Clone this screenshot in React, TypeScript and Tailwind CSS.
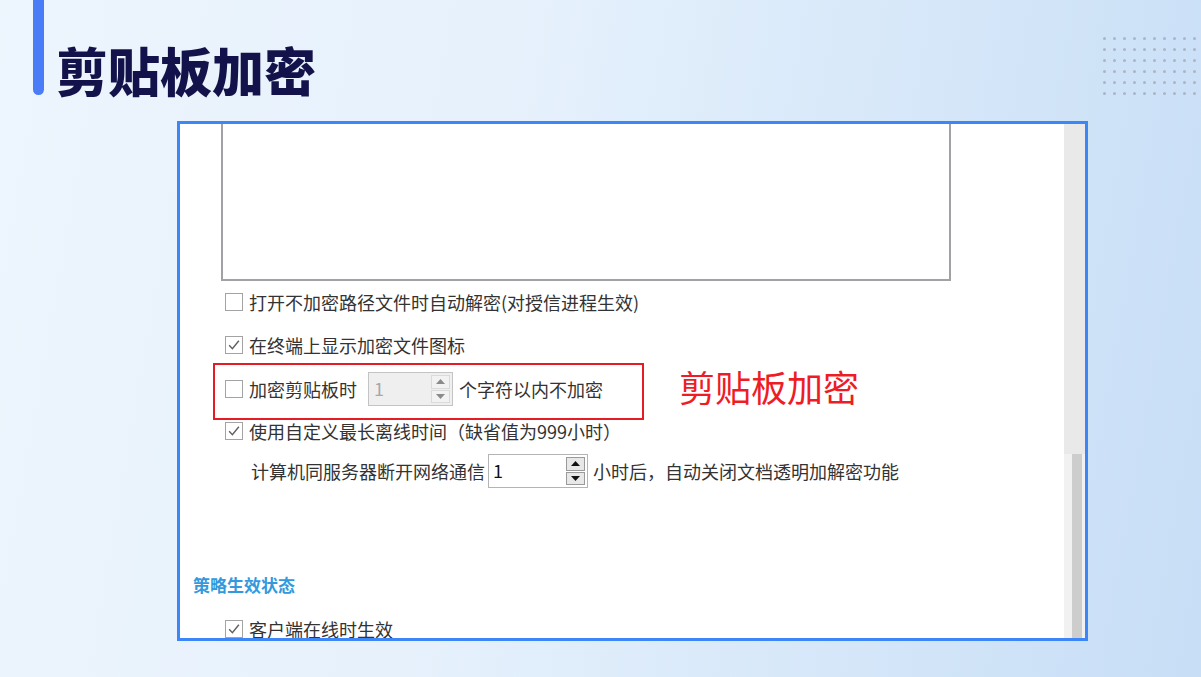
import React from "react";

const FONT = '"Microsoft YaHei", "Noto Sans CJK SC", "Noto Sans", sans-serif';

function CheckBox({ checked }: { checked?: boolean }) {
  return (
    <div className="w-[18px] h-[18px] border border-[#a3a3a3] bg-white flex items-center justify-center shrink-0">
      {checked && (
        <svg width="14" height="14" viewBox="0 0 13 13">
          <path d="M2 6.8 L5 10 L11 2.5" fill="none" stroke="#5f5f5f" strokeWidth="1.3" />
        </svg>
      )}
    </div>
  );
}

function Arrow({ up, color }: { up?: boolean; color: string }) {
  return (
    <svg width="9" height="5" viewBox="0 0 9 5">
      {up ? <path d="M0 5 L4.5 0 L9 5 Z" fill={color} /> : <path d="M0 0 L4.5 5 L9 0 Z" fill={color} />}
    </svg>
  );
}

function Spinner({ disabled, width }: { disabled?: boolean; width: string }) {
  return (
    <div
      className={
        disabled
          ? `${width} h-[34px] border border-[#c4c4c4] bg-[#efefef] flex items-stretch shrink-0`
          : `${width} h-[34px] border border-[#b4b4b4] bg-white flex items-stretch shrink-0`
      }
    >
      <div
        className={
          disabled
            ? "flex-1 pl-[5px] pt-[3px] text-[18px] leading-[24px] text-[#a8a8a8]"
            : "flex-1 pl-[4px] pt-[3px] text-[18px] leading-[24px] text-[#111]"
        }
      >
        1
      </div>
      <div className="w-[21px] flex flex-col py-[2px] pr-[2px] gap-[1px]">
        <div
          className={
            disabled
              ? "flex-1 border border-[#dadada] bg-[#f2f2f2] flex items-center justify-center"
              : "flex-1 border border-[#9a9a9a] bg-[#e8e8e8] flex items-center justify-center"
          }
        >
          <Arrow up color={disabled ? "#8a8a8a" : "#111"} />
        </div>
        <div
          className={
            disabled
              ? "flex-1 border border-[#dadada] bg-[#f2f2f2] flex items-center justify-center"
              : "flex-1 border border-[#9a9a9a] bg-[#e8e8e8] flex items-center justify-center"
          }
        >
          <Arrow color={disabled ? "#8a8a8a" : "#111"} />
        </div>
      </div>
    </div>
  );
}

export default function App() {
  const dots = Array.from({ length: 60 });
  return (
    <div
      className="w-[1201px] h-[677px] overflow-hidden flex flex-col bg-[linear-gradient(100deg,#edf5fd_0%,#e6f1fc_40%,#c7def6_100%)]"
      style={{ fontFamily: FONT }}
    >
      {/* header */}
      <div className="flex h-[121px] shrink-0">
        <div className="ml-[33px] w-[11px] h-[95px] rounded-b-full bg-[#4a7cf8]" />
        <h1 className="ml-[12px] mt-[44px] text-[52px] leading-none font-black text-[#14124a]">
          剪贴板加密
        </h1>
        <div className="ml-auto mr-[5px] mt-[37px] grid grid-cols-10 gap-x-[7px] gap-y-[8px] h-fit">
          {dots.map((_, i) => (
            <div key={i} className="w-[3px] h-[3px] rounded-full bg-[#a8b6c6]" />
          ))}
        </div>
      </div>

      {/* screenshot panel */}
      <div className="ml-[177px] w-[911px] h-[520px] border-[3px] border-[#3d86f8] bg-white flex overflow-hidden">
        <div className="relative flex-1 flex flex-col text-[18px] text-[#333] overflow-hidden">
          {/* list box */}
          <div className="ml-[41px] w-[730px] h-[157px] shrink-0 border-x-2 border-b-2 border-[#a2a2a6] bg-white" />

          {/* row 1 */}
          <div className="mt-[6px] ml-[45px] h-[30px] flex items-center shrink-0">
            <CheckBox />
            <span className="ml-[6px] whitespace-nowrap">打开不加密路径文件时自动解密(对授信进程生效)</span>
          </div>
          {/* row 2 */}
          <div className="mt-[13px] ml-[45px] h-[30px] flex items-center shrink-0">
            <CheckBox checked />
            <span className="ml-[6px] whitespace-nowrap">在终端上显示加密文件图标</span>
          </div>
          {/* row 3 */}
          <div className="mt-[10px] ml-[45px] h-[38px] flex items-center shrink-0">
            <CheckBox />
            <span className="ml-[6px] whitespace-nowrap">加密剪贴板时</span>
            <div className="ml-[11px]">
              <Spinner disabled width="w-[85px]" />
            </div>
            <span className="ml-[6px] whitespace-nowrap">个字符以内不加密</span>
          </div>
          {/* row 4 */}
          <div className="mt-[8px] ml-[45px] h-[30px] flex items-center shrink-0">
            <CheckBox checked />
            <span className="ml-[6px] whitespace-nowrap">使用自定义最长离线时间（缺省值为999小时）</span>
          </div>
          {/* row 5 */}
          <div className="mt-[8px] ml-[71px] h-[34px] flex items-center shrink-0">
            <span className="whitespace-nowrap">计算机同服务器断开网络通信</span>
            <div className="ml-[3px]">
              <Spinner width="w-[100px]" />
            </div>
            <span className="ml-[5px] whitespace-nowrap">小时后，自动关闭文档透明加解密功能</span>
          </div>

          {/* section title */}
          <div className="mt-[85px] ml-[13px] h-[24px] flex items-center shrink-0 text-[17px] font-bold text-[#3399dd]">
            策略生效状态
          </div>
          {/* last row */}
          <div className="mt-[17px] ml-[45px] h-[30px] flex items-center shrink-0">
            <CheckBox checked />
            <span className="ml-[6px] whitespace-nowrap">客户端在线时生效</span>
          </div>

          {/* annotation overlays */}
          <div className="absolute left-[33px] top-[239px] w-[431px] h-[57px] border-2 border-[#e51c23]" />
          <div className="absolute left-[499px] top-[244px] text-[36px] leading-none text-[#ee1c25] whitespace-nowrap">
            剪贴板加密
          </div>
        </div>

        {/* scrollbar */}
        <div className="w-[21px] flex flex-col shrink-0">
          <div className="h-[330px] bg-[#e9e9e9]" />
          <div className="flex-1 bg-[#f1f1f1] pl-[8px] pr-[3px]">
            <div className="h-full bg-[#cdcdcd]" />
          </div>
        </div>
      </div>
    </div>
  );
}
